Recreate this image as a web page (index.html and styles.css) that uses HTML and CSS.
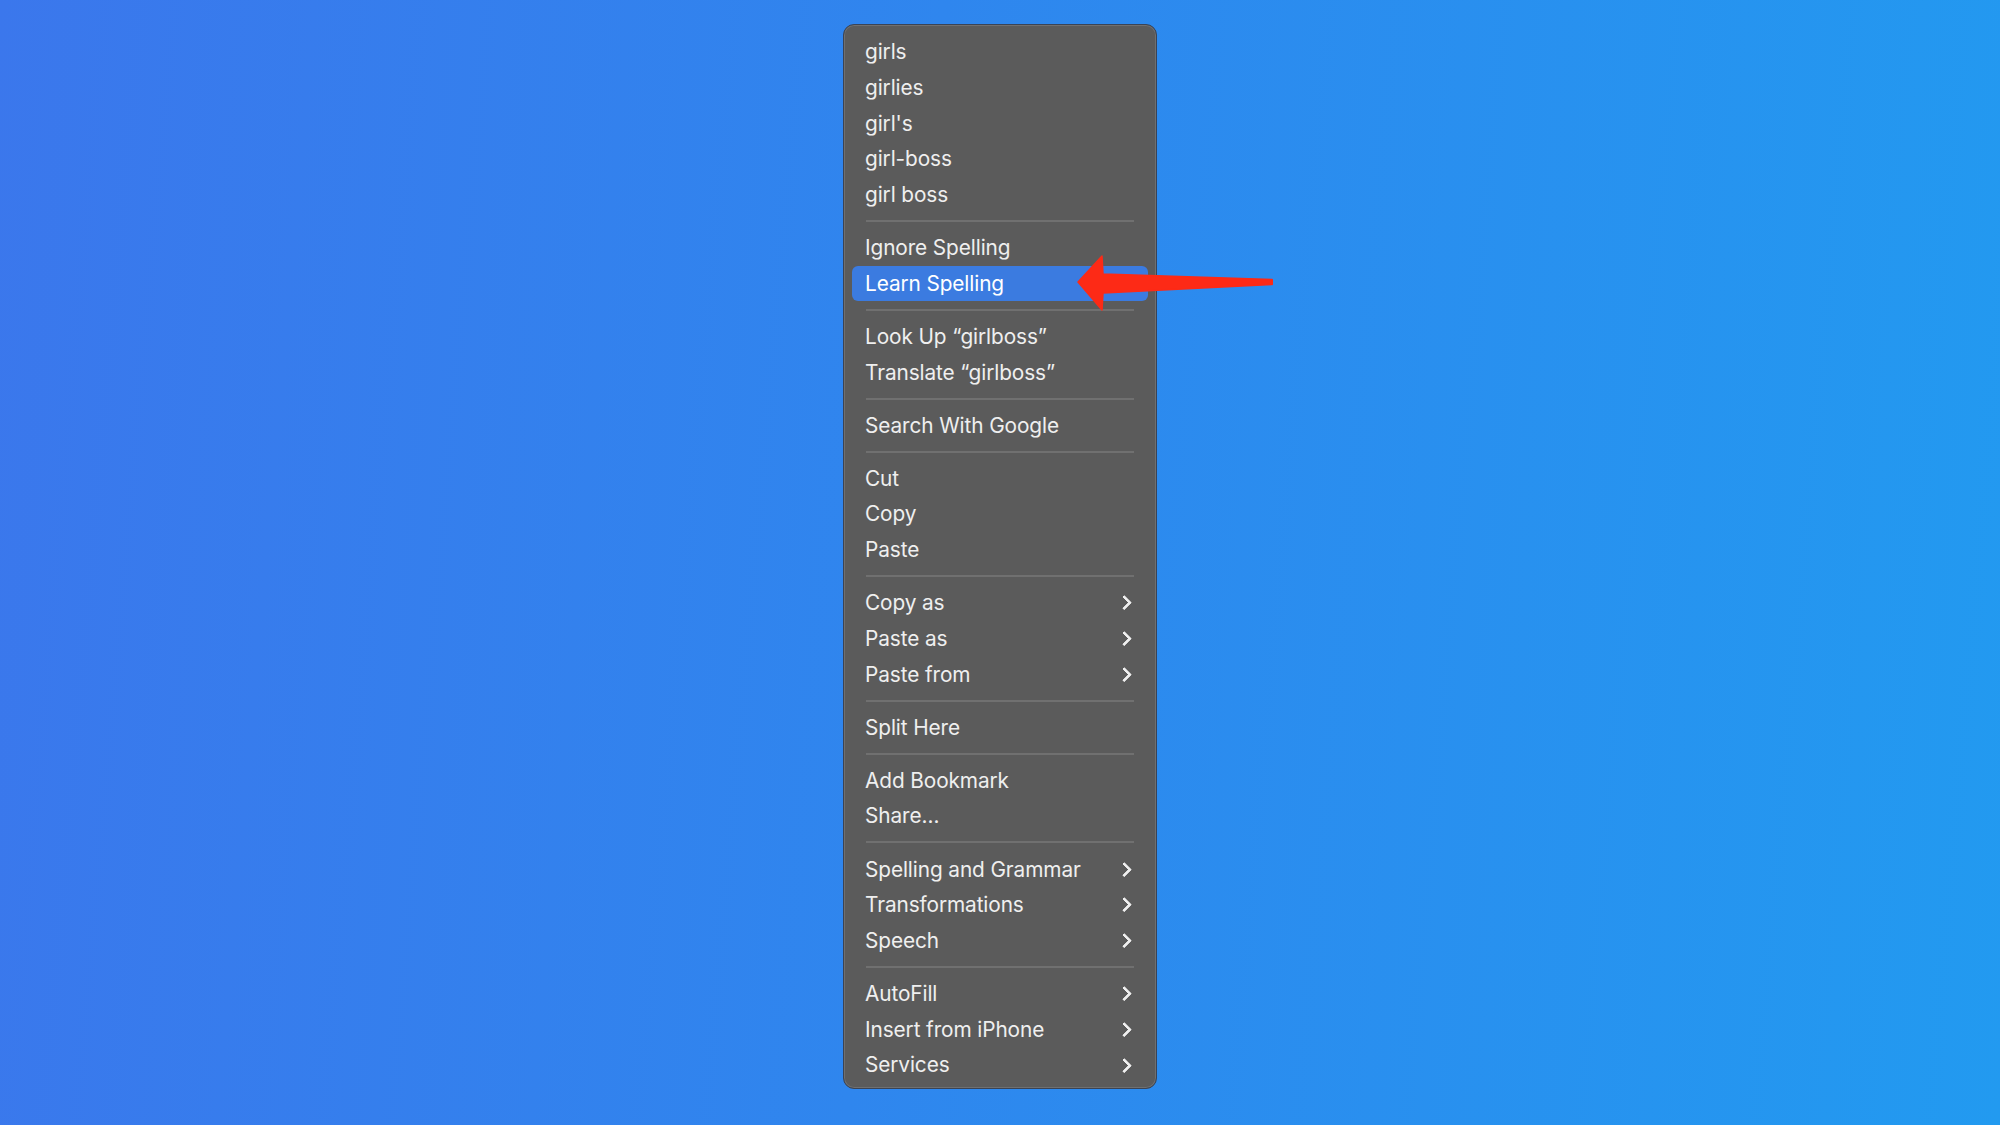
FILE: index.html
```html
<!DOCTYPE html>
<html>

<head>
    <meta charset="UTF-8">
    <meta name="viewport" content="width=device-width, initial-scale=1.0">
    <link rel="stylesheet" href="styles.css">
    <title>Context menu</title>
</head>

<body>
    <div id="stage">
        <div class="menu">
            <div class="item">girls</div>
            <div class="item">girlies</div>
            <div class="item">girl's</div>
            <div class="item">girl-boss</div>
            <div class="item">girl boss</div>
            <div class="sep"></div>
            <div class="item">Ignore Spelling</div>
            <div class="item active">Learn Spelling</div>
            <div class="sep"></div>
            <div class="item">Look Up &ldquo;girlboss&rdquo;</div>
            <div class="item">Translate &ldquo;girlboss&rdquo;</div>
            <div class="sep"></div>
            <div class="item">Search With Google</div>
            <div class="sep"></div>
            <div class="item">Cut</div>
            <div class="item">Copy</div>
            <div class="item">Paste</div>
            <div class="sep"></div>
            <div class="item sub">Copy as</div>
            <div class="item sub">Paste as</div>
            <div class="item sub">Paste from</div>
            <div class="sep"></div>
            <div class="item">Split Here</div>
            <div class="sep"></div>
            <div class="item">Add Bookmark</div>
            <div class="item">Share&hellip;</div>
            <div class="sep"></div>
            <div class="item sub">Spelling and Grammar</div>
            <div class="item sub">Transformations</div>
            <div class="item sub">Speech</div>
            <div class="sep"></div>
            <div class="item sub">AutoFill</div>
            <div class="item sub">Insert from iPhone</div>
            <div class="item sub">Services</div>

            <!-- red pointer next to the highlighted entry -->
            <svg class="pointer" viewBox="0 0 196 58" width="196" height="58">
                <path d="M1 28 L25 2 L26 20 L195 25.5 Q197 28 195 30.5 L26 39 L25 56 Z" fill="#fd2a16" stroke="#fd2a16" stroke-width="1.5" stroke-linejoin="round" />
            </svg>
        </div>
    </div>
</body>

</html>
```

FILE: styles.css
```css
html,
body {
    width: 100%;
    height: 100%;
    margin: 0;
    padding: 0;
}

body {
    background: linear-gradient(95deg, #3b77ec 0%, #2f86ee 45%, #229af0 100%);
    font-family: Inter, "Noto Sans", sans-serif;
}

#stage {
    display: flex;
    justify-content: center;
    padding-top: 24px;
}

.menu {
    position: relative;
    width: 296px;
    padding: 9px 8px 5px;
    background: #5b5b5b;
    border: 1px solid #3a4456;
    border-radius: 11px;
    box-shadow: inset 0 0 0 1px #707070;
}

.item {
    display: flex;
    align-items: center;
    justify-content: space-between;
    height: 35.7px;
    padding: 0 16px 0 13px;
    border-radius: 6px;
    color: #efefef;
    font-size: 20.8px;
    letter-spacing: -0.1px;
}

.item.active {
    background: #3b7be0;
    color: #fff;
}

.item.sub::after {
    content: "";
    width: 7.5px;
    height: 7.5px;
    margin-right: 3px;
    border-top: 3px solid #efefef;
    border-right: 3px solid #efefef;
    border-radius: 1px;
    transform: rotate(45deg);
}

.sep {
    height: 2px;
    margin: 7.6px 14px 7.8px;
    background: #707070;
}

.pointer {
    position: absolute;
    left: 233px;
    top: 229px;
}
```
